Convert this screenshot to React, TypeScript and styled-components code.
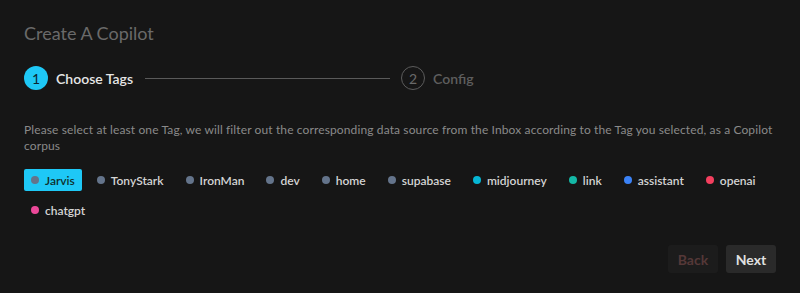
import styled, { createGlobalStyle } from "styled-components";

const GlobalStyle = createGlobalStyle`
  html, body {
    margin: 0;
    padding: 0;
    background: #161616;
  }
  body {
    font-family: Lato, "Open Sans", "Liberation Sans", sans-serif;
  }
`;

const TAGS = [
    { name: "Jarvis", color: "#64748b" },
    { name: "TonyStark", color: "#64748b" },
    { name: "IronMan", color: "#64748b" },
    { name: "dev", color: "#64748b" },
    { name: "home", color: "#64748b" },
    { name: "supabase", color: "#64748b" },
    { name: "midjourney", color: "#06b6d4" },
    { name: "link", color: "#14b8a6" },
    { name: "assistant", color: "#3b82f6" },
    { name: "openai", color: "#f43f5e" },
    { name: "chatgpt", color: "#ec4899" },
];

const Page = styled.div`
    width: 800px;
    height: 293px;
    box-sizing: border-box;
    padding: 20px 24px 20px 24px;
    display: flex;
    flex-direction: column;
    background: #161616;
`;

const Title = styled.h1`
    margin: 0;
    font-size: 18px;
    font-weight: 400;
    line-height: 27px;
    color: #6a6a6a;
`;

const Steps = styled.div`
    display: flex;
    align-items: center;
    margin-top: 19px;
    height: 24px;
`;

const StepIcon = styled.span<{ $active?: boolean }>`
    width: 24px;
    height: 24px;
    box-sizing: border-box;
    border-radius: 50%;
    display: flex;
    align-items: center;
    justify-content: center;
    font-size: 14px;
    background: ${(p) => (p.$active ? "#1ec8f6" : "transparent")};
    border: ${(p) => (p.$active ? "none" : "1px solid #5c5c5c")};
    color: ${(p) => (p.$active ? "#0b2530" : "#6a6a6a")};
`;

const StepTitle = styled.span<{ $active?: boolean }>`
    margin-left: 8px;
    font-size: 14px;
    font-weight: 600;
    color: ${(p) => (p.$active ? "#e6e6e6" : "#5e5e5e")};
`;

const StepLine = styled.span`
    width: 245px;
    height: 1px;
    background: #5a5a5a;
    margin: 0 11px 0 12px;
`;

const Description = styled.p`
    margin: 32px 0 0 0;
    font-size: 12px;
    letter-spacing: 0.12px;
    line-height: 16px;
    color: #8a8a8a;
`;

const TagList = styled.div`
    display: flex;
    flex-wrap: wrap;
    gap: 8px;
    margin-top: 15px;
`;

const Tag = styled.button<{ $selected?: boolean }>`
    display: flex;
    align-items: center;
    gap: 6px;
    height: 22px;
    padding: 0 7px;
    border: none;
    border-radius: 2px;
    font-family: inherit;
    font-size: 12px;
    font-weight: 600;
    background: ${(p) => (p.$selected ? "#1ec8f6" : "transparent")};
    color: ${(p) => (p.$selected ? "#10302c" : "#d4d4d4")};
    cursor: pointer;
`;

const Dot = styled.span<{ $color: string }>`
    width: 8px;
    height: 8px;
    border-radius: 50%;
    background: ${(p) => p.$color};
`;

const Footer = styled.div`
    margin-top: auto;
    display: flex;
    justify-content: flex-end;
    gap: 8px;
`;

const Button = styled.button<{ $disabled?: boolean }>`
    width: 50px;
    height: 28px;
    border: none;
    border-radius: 3px;
    font-family: inherit;
    font-size: 14px;
    font-weight: 700;
    background: ${(p) => (p.$disabled ? "#1c1c1c" : "#2a2a2a")};
    color: ${(p) => (p.$disabled ? "#553838" : "#e0e0e0")};
    cursor: ${(p) => (p.$disabled ? "not-allowed" : "pointer")};
`;

const App = () => {
    return (
        <Page>
            <GlobalStyle />
            <Title>Create A Copilot</Title>
            <Steps>
                <StepIcon $active>1</StepIcon>
                <StepTitle $active>Choose Tags</StepTitle>
                <StepLine />
                <StepIcon>2</StepIcon>
                <StepTitle>Config</StepTitle>
            </Steps>
            <Description>
                Please select at least one Tag, we will filter out the corresponding data source from the Inbox according to the Tag you selected, as a Copilot corpus
            </Description>
            <TagList>
                {TAGS.map((tag, index) => (
                    <Tag key={tag.name} $selected={index === 0}>
                        <Dot $color={tag.color} />
                        {tag.name}
                    </Tag>
                ))}
            </TagList>
            <Footer>
                <Button $disabled>Back</Button>
                <Button>Next</Button>
            </Footer>
        </Page>
    );
};

export default App;
